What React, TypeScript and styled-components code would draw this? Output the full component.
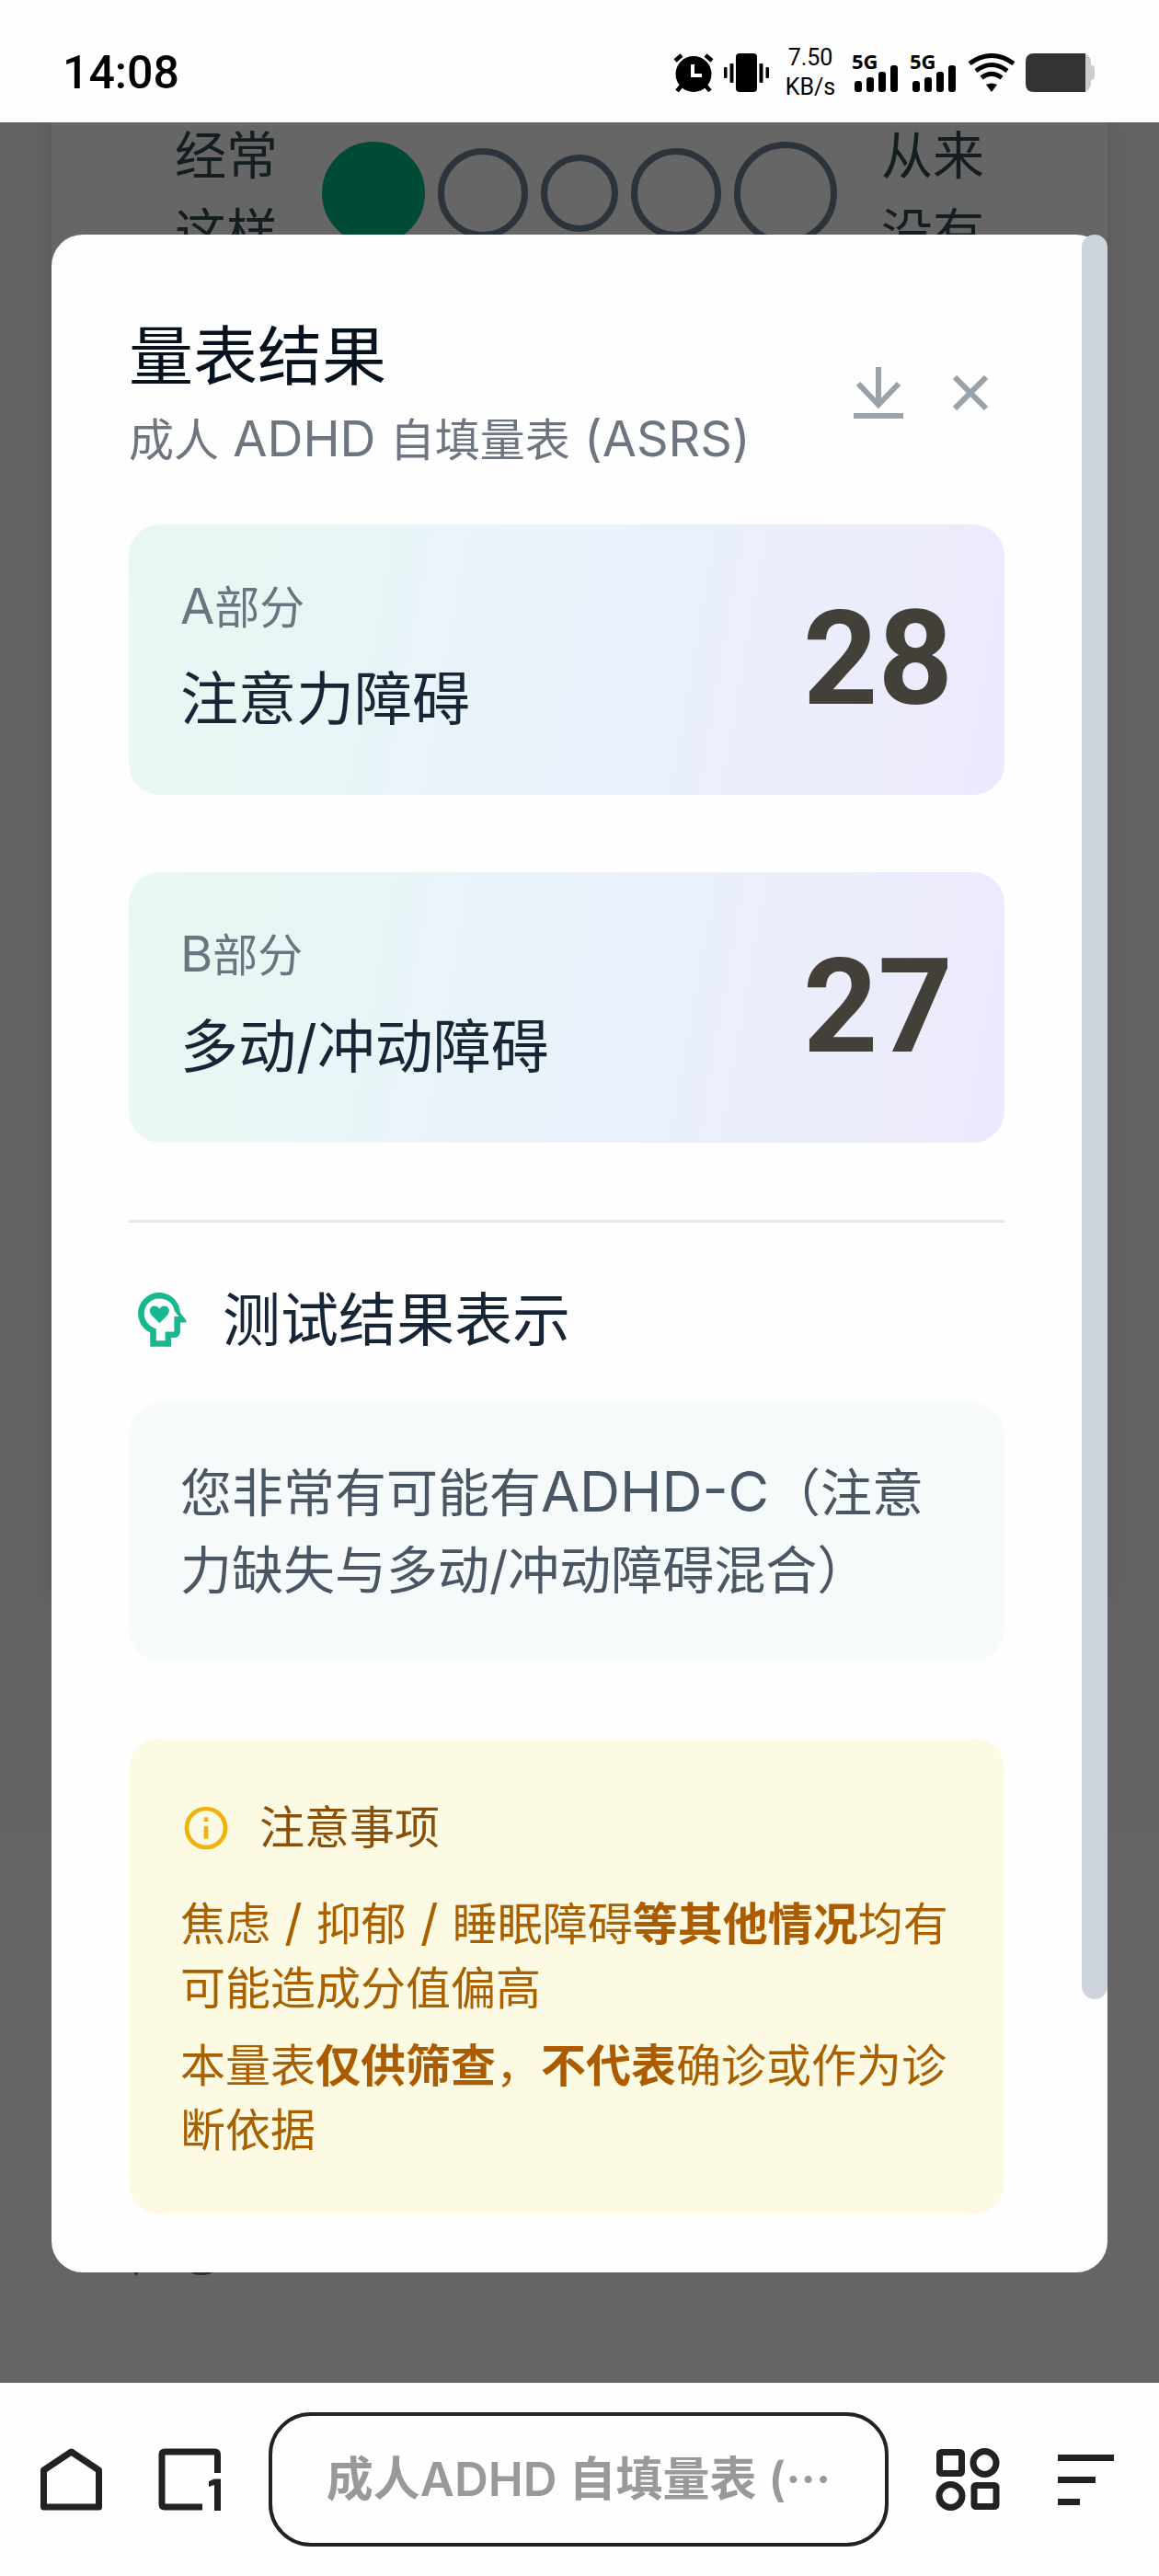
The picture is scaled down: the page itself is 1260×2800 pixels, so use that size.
import React from 'react';
import styled, { createGlobalStyle } from 'styled-components';

const GlobalStyle = createGlobalStyle`
  * { box-sizing: border-box; }
  body {
    margin: 0;
    background: #fefefe;
    font-family: Inter, 'Noto Sans CJK SC', sans-serif;
  }
  h1, h2, h3, p { margin: 0; font-weight: 400; }
  button {
    padding: 0;
    border: 0;
    background: none;
    color: inherit;
    font: inherit;
    cursor: pointer;
  }
  svg { display: block; flex: none; }
`;

const Screen = styled.div`
  display: flex;
  flex-direction: column;
  min-height: 100vh;
`;

/* ---------- status bar ---------- */

const StatusBar = styled.header`
  display: flex;
  align-items: center;
  justify-content: space-between;
  height: 133px;
  padding: 24px 70px 0 68px;
  color: #000;
`;

const Clock = styled.time`
  font: 500 50px/56px Roboto, sans-serif;
`;

const StatusIcons = styled.div`
  display: flex;
  align-items: center;
  gap: 11px;
`;

const NetSpeed = styled.div`
  width: 68px;
  font: 400 25px/32px Roboto, sans-serif;
  text-align: center;
`;

const Signal = styled.div`
  display: flex;
  flex-direction: column;
  width: 52px;
  height: 42px;
  font: 700 22px/16px 'Noto Sans', sans-serif;
`;

const Bars = styled.div`
  display: flex;
  align-items: flex-end;
  gap: 5px;
  height: 29px;
  margin: -3px 0 0 3px;
`;

const Bar = styled.i<{ $height: number }>`
  width: 8px;
  height: ${(p) => p.$height}px;
  border-radius: 3px;
  background: #000;
`;

/* ---------- page behind the dialog ---------- */

const Stage = styled.main`
  display: grid;
  flex: 1;
`;

const Backdrop = styled.div`
  grid-area: 1 / 1;
  display: flex;
  flex-direction: column;
  justify-content: space-between;
  padding: 0 56px 117px;
  background: linear-gradient(#626262 75%, #656565 76%);
`;

const Question = styled.div`
  display: flex;
  align-items: flex-start;
  justify-content: space-between;
  min-height: 1600px;
  padding: 0 134px;
  background: #666;
  box-shadow: 0 0 16px rgba(0, 0, 0, 0.1);
  clip-path: inset(0 -20px -20px);
  color: #141d20;
`;

const Pole = styled.p`
  width: 112px;
  margin-top: -6px;
  font-size: 56px;
  line-height: 84px;
`;

const Options = styled.div`
  display: flex;
  align-items: center;
  gap: 14px;
  padding-top: 21px;
`;

const Option = styled.input<{ $size: number }>`
  appearance: none;
  width: ${(p) => p.$size}px;
  height: ${(p) => p.$size}px;
  margin: 0;
  border: 7px solid #2c333b;
  border-radius: 50%;
  &:checked {
    border-color: #004b36;
    background: #004b36;
  }
`;

const Traces = styled.div`
  display: flex;
  gap: 58px;
  padding-left: 90px;
`;

const Trace = styled.i<{ $width: number }>`
  width: ${(p) => p.$width}px;
  height: 6px;
  border-radius: 0 0 50% 50%;
  background: #2a2a2a;
`;

/* ---------- dialog ---------- */

const Overlay = styled.div`
  grid-area: 1 / 1;
  z-index: 1;
  padding: 122px 56px 120px;
`;

const Dialog = styled.section`
  display: flex;
  height: 100%;
  border-radius: 34px;
  background: #fefefe;
`;

const DialogBody = styled.div`
  flex: 1;
  min-width: 0;
  padding: 84px 84px 63px;
`;

const ScrollThumb = styled.div`
  width: 28px;
  height: 1918px;
  border-radius: 14px;
  background: #cdd4dc;
`;

const DialogHead = styled.div`
  display: flex;
  align-items: center;
  justify-content: space-between;
  margin-bottom: 56px;
`;

const Title = styled.h1`
  margin-bottom: 7px;
  color: #06121d;
  font-size: 70px;
  line-height: 98px;
`;

const Subtitle = styled.p`
  color: #6d7580;
  font-size: 49px;
  line-height: 70px;
`;

const Latin = styled.span`
  font-size: 54px;
  line-height: 1;
  white-space: pre-wrap;
`;

const LargeLatin = styled(Latin)`
  font-size: 61px;
`;

const Actions = styled.div`
  display: flex;
  gap: 26px;
  color: #98a2ab;
`;

const ActionButton = styled.button`
  display: grid;
  place-items: center;
  width: 74px;
  height: 74px;
`;

const Scores = styled.div`
  display: flex;
  flex-direction: column;
  gap: 84px;
  padding-bottom: 84px;
  border-bottom: 3px solid #e6e7e9;
`;

const ScoreCard = styled.article`
  display: flex;
  align-items: center;
  justify-content: space-between;
  padding: 56px;
  border-radius: 34px;
  background: linear-gradient(100deg, #e8f8f1 0%, #eaf3fa 40%, #eaf0fa 65%, #ede9fd 100%);
`;

const Part = styled.p`
  margin-bottom: 14px;
  color: #6b7581;
  font-size: 49px;
  line-height: 70px;
`;

const PartName = styled.h2`
  color: #172636;
  font-size: 63px;
  line-height: 98px;
`;

const Score = styled.strong`
  color: #43403a;
  font: 700 142px/160px Roboto, sans-serif;
`;

const ResultHead = styled.div`
  display: flex;
  align-items: center;
  gap: 32px;
  margin: 56px 0 42px;
  color: #17b890;
`;

const Message = styled.p`
  padding: 56px;
  border-radius: 34px;
  background: #f7fafb;
  color: #4a5663;
  font-size: 56px;
  line-height: 84px;
`;

const Notice = styled.section`
  margin-top: 84px;
  padding: 56px;
  border-radius: 34px;
  background: #fdfae3;
  color: #a86000;
`;

const NoticeHead = styled.div`
  display: flex;
  align-items: center;
  gap: 30px;
  margin-bottom: 28px;
  color: #efb40c;
`;

const NoticeTitle = styled.h3`
  color: #8a4f08;
  font-size: 49px;
  line-height: 84px;
`;

const NoticeText = styled.p`
  font-size: 49px;
  line-height: 70px;
  & + & { margin-top: 14px; }
  strong { color: #ac5c00; font-weight: 700; }
`;

/* ---------- browser bar ---------- */

const BrowserBar = styled.nav`
  display: flex;
  align-items: center;
  height: 210px;
  padding: 0 48px 0 43px;
  color: #222;
`;

const BarButton = styled.button<{ $gap: number }>`
  margin-right: ${(p) => p.$gap}px;
`;

const AddressBar = styled.button`
  flex: 1;
  min-width: 0;
  height: 146px;
  margin-right: 51px;
  border: 4px solid #222;
  border-radius: 46px;
  color: #999;
  font-size: 51px;
  font-weight: 600;
  line-height: 70px;
  white-space: nowrap;
`;

const AlarmIcon = () => (
  <svg width="44" height="42" viewBox="0 0 44 42" fill="none">
    <circle cx="22" cy="22.500" r="19.500" fill="#000" />
    <path d="M2 8 9 2M42 8 35 2M9 35 4 41M35 35 40 41" stroke="#000" strokeWidth="4.500" />
    <path d="M21 12V24H31" stroke="#fff" strokeWidth="4" />
  </svg>
);

const VibrateIcon = () => (
  <svg width="49" height="42" viewBox="0 0 49 42">
    <rect x="13" width="23" height="42" rx="4" />
    <rect x="6.500" y="11" width="4" height="21" rx="1" />
    <rect x="38.500" y="11" width="4" height="21" rx="1" />
    <rect y="15" width="3.500" height="12" rx="1" />
    <rect x="45.500" y="15" width="3.500" height="12" rx="1" />
  </svg>
);

const WifiIcon = () => (
  <svg width="52" height="42" viewBox="0 0 52 42" fill="none" stroke="#000" strokeWidth="5">
    <path d="M2 11Q26-6 50 11M9 19Q26 6 43 19M15 26.500Q26 18 37 26.500" />
    <path d="M20 34Q26 31 32 34L26 42Z" fill="#000" stroke="none" />
  </svg>
);

const BatteryIcon = () => (
  <svg width="75" height="42" viewBox="0 0 75 42">
    <rect x="10" width="61" height="42" rx="9" fill="#ccc" />
    <rect x="66" y="13" width="9" height="16" rx="4" fill="#ccc" />
    <path d="M9 0H65V42H9Q0 42 0 33V9Q0 0 9 0Z" fill="#333" />
  </svg>
);

const DownloadIcon = () => (
  <svg width="54" height="58" viewBox="0 0 54 58" fill="none" stroke="currentColor" strokeWidth="6">
    <path d="M27 1V42M5 19 27 42 49 19M0 54H54" />
  </svg>
);

const CloseIcon = () => (
  <svg width="38" height="38" viewBox="0 0 38 38" fill="none" stroke="currentColor" strokeWidth="6">
    <path d="M2 2 36 36M36 2 2 36" />
  </svg>
);

const HeadHeartIcon = () => (
  <svg width="70" height="70" viewBox="0.9 1.2 21.4 21.4" fill="none">
    <path
      d="M13 3C9.230 3 6.190 5.950 6 9.660L4.080 12.190C3.840 12.500 4.080 13 4.500 13H6V16C6 17.110 6.890 18 8 18H9V21H16V16.310C18.370 15.190 20 12.800 20 10C20 6.140 16.880 3 13 3ZM14 15.010V19H11V16H8V11H6.500L8 9.030C8.070 6.720 10.240 5 13 5C15.760 5 18 7.240 18 10C18 12.370 16.340 14.360 14 15.010Z"
      transform="translate(24 0) scale(-1 1)"
      fill="currentColor"
    />
    <path
      d="M11.100 13.200 8.800 10.900C8.200 10.300 7.900 9.700 7.900 9C7.900 8.100 8.600 7.500 9.450 7.500C10.100 7.500 10.700 7.800 11.100 8.400C11.500 7.800 12.100 7.500 12.750 7.500C13.600 7.500 14.300 8.100 14.300 9C14.300 9.700 14 10.300 13.400 10.900Z"
      fill="currentColor"
    />
  </svg>
);

const InfoIcon = () => (
  <svg width="56" height="56" viewBox="0 0 24 24" fill="none" stroke="currentColor" strokeWidth="2">
    <circle cx="12" cy="12" r="9" />
    <path d="M12 7V9M12 11V17" />
  </svg>
);

const HomeIcon = () => (
  <svg width="69" height="68" viewBox="0 0 69 68" fill="none" stroke="currentColor" strokeWidth="7" strokeLinejoin="round">
    <path d="M4.500 24 34.500 4 64.500 24V64H4.500Z" />
  </svg>
);

const TabsIcon = () => (
  <svg width="69" height="68" viewBox="0 0 69 68" fill="none" stroke="currentColor" strokeWidth="7">
    <path d="M64.500 27V7Q64.500 4 61.500 4H7Q4 4 4 7V61Q4 64 7 64H48" />
    <path d="M55 36 61 33.500H68V68H61V40L55 42Z" fill="currentColor" stroke="none" />
  </svg>
);

const AppsIcon = () => (
  <svg width="70" height="68" viewBox="0 0 70 68" fill="none" stroke="currentColor" strokeWidth="7">
    <rect x="4.500" y="4.500" width="24" height="23" rx="2" />
    <circle cx="53.500" cy="16" r="12.500" />
    <circle cx="16.500" cy="52" r="12.500" />
    <rect x="42" y="40.500" width="24" height="23" rx="2" />
  </svg>
);

const MenuIcon = () => (
  <svg width="62" height="55" viewBox="0 0 62 55">
    <path d="M0 0H61V7H0ZM0 24H41V31H0ZM0 48H24V55H0Z" fill="currentColor" />
  </svg>
);

const SignalStrength = () => (
  <Signal>
    5G
    <Bars>
      {[12, 16, 22, 29].map((height) => (
        <Bar key={height} $height={height} />
      ))}
    </Bars>
  </Signal>
);

const OPTION_SIZES = [112, 98, 84, 98, 112];

const SCORES = [
  { part: 'A', name: '注意力障碍', score: 28 },
  { part: 'B', name: '多动/冲动障碍', score: 27 },
];

export default function App() {
  return (
    <Screen>
      <GlobalStyle />
      <StatusBar>
        <Clock>14:08</Clock>
        <StatusIcons>
          <AlarmIcon />
          <VibrateIcon />
          <NetSpeed>
            7.50
            <br />
            KB/s
          </NetSpeed>
          <SignalStrength />
          <SignalStrength />
          <WifiIcon />
          <BatteryIcon />
        </StatusIcons>
      </StatusBar>

      <Stage>
        <Backdrop>
          <Question>
            <Pole>经常这样</Pole>
            <Options>
              {OPTION_SIZES.map((size, i) => (
                <Option
                  key={i}
                  type="radio"
                  name="frequency"
                  aria-label={`选项 ${i + 1}`}
                  defaultChecked={i === 0}
                  $size={size}
                />
              ))}
            </Options>
            <Pole>从来没有</Pole>
          </Question>
          <Traces>
            <Trace $width={4} />
            <Trace $width={22} />
          </Traces>
        </Backdrop>

        <Overlay>
          <Dialog role="dialog" aria-labelledby="result-title">
            <DialogBody>
              <DialogHead>
                <div>
                  <Title id="result-title">量表结果</Title>
                  <Subtitle>
                    成人<Latin> ADHD </Latin>自填量表<Latin> (ASRS)</Latin>
                  </Subtitle>
                </div>
                <Actions>
                  <ActionButton aria-label="下载">
                    <DownloadIcon />
                  </ActionButton>
                  <ActionButton aria-label="关闭">
                    <CloseIcon />
                  </ActionButton>
                </Actions>
              </DialogHead>

              <Scores>
                {SCORES.map(({ part, name, score }) => (
                  <ScoreCard key={part}>
                    <div>
                      <Part>
                        <Latin>{part}</Latin>部分
                      </Part>
                      <PartName>{name}</PartName>
                    </div>
                    <Score>{score}</Score>
                  </ScoreCard>
                ))}
              </Scores>

              <ResultHead>
                <HeadHeartIcon />
                <PartName>测试结果表示</PartName>
              </ResultHead>
              <Message>
                您非常有可能有<LargeLatin>ADHD-C</LargeLatin>（注意力缺失与多动/冲动障碍混合）
              </Message>

              <Notice>
                <NoticeHead>
                  <InfoIcon />
                  <NoticeTitle>注意事项</NoticeTitle>
                </NoticeHead>
                <NoticeText>
                  焦虑<Latin> / </Latin>抑郁<Latin> / </Latin>睡眠障碍<strong>等其他情况</strong>
                  均有可能造成分值偏高
                </NoticeText>
                <NoticeText>
                  本量表<strong>仅供筛查</strong>，<strong>不代表</strong>确诊或作为诊断依据
                </NoticeText>
              </Notice>
            </DialogBody>
            <ScrollThumb />
          </Dialog>
        </Overlay>
      </Stage>

      <BrowserBar>
        <BarButton aria-label="主页" $gap={60}>
          <HomeIcon />
        </BarButton>
        <BarButton aria-label="标签页" $gap={51}>
          <TabsIcon />
        </BarButton>
        <AddressBar>成人ADHD 自填量表 (···</AddressBar>
        <BarButton aria-label="应用" $gap={63}>
          <AppsIcon />
        </BarButton>
        <BarButton aria-label="菜单" $gap={0}>
          <MenuIcon />
        </BarButton>
      </BrowserBar>
    </Screen>
  );
}
